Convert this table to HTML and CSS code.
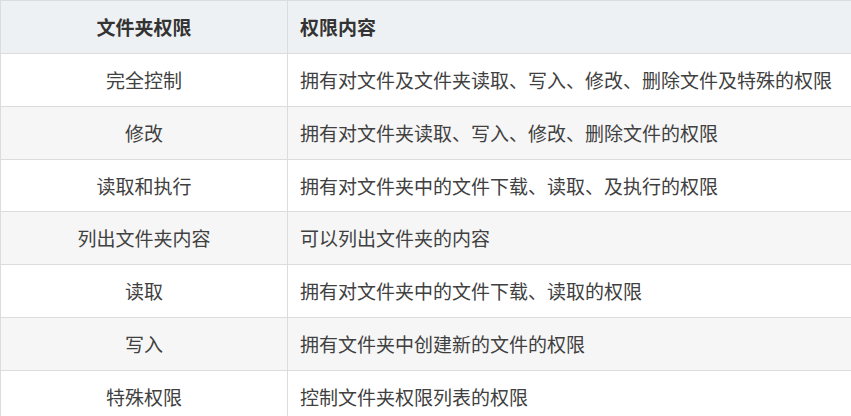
FILE: index.html
```html
<!DOCTYPE html>
<html lang="zh-CN">
<head>
<meta charset="utf-8">
<link rel="stylesheet" href="styles.css">
</head>
<body>
<table class="perm-table">
  <thead>
    <tr><th class="c1">文件夹权限</th><th class="c2">权限内容</th></tr>
  </thead>
  <tbody>
    <tr><td class="c1">完全控制</td><td class="c2">拥有对文件及文件夹读取、写入、修改、删除文件及特殊的权限</td></tr>
    <tr><td class="c1">修改</td><td class="c2">拥有对文件夹读取、写入、修改、删除文件的权限</td></tr>
    <tr><td class="c1">读取和执行</td><td class="c2">拥有对文件夹中的文件下载、读取、及执行的权限</td></tr>
    <tr><td class="c1">列出文件夹内容</td><td class="c2">可以列出文件夹的内容</td></tr>
    <tr><td class="c1">读取</td><td class="c2">拥有对文件夹中的文件下载、读取的权限</td></tr>
    <tr><td class="c1">写入</td><td class="c2">拥有文件夹中创建新的文件的权限</td></tr>
    <tr><td class="c1">特殊权限</td><td class="c2">控制文件夹权限列表的权限</td></tr>
  </tbody>
</table>
</body>
</html>
```
FILE: styles.css
```css
html, body {
  margin: 0;
  padding: 0;
  background: #fff;
  overflow: hidden;
}
.perm-table {
  border-collapse: collapse;
  width: 100%;
  table-layout: fixed;
  font-family: "Microsoft YaHei", "Noto Sans CJK SC", sans-serif;
  font-size: 19px;
  color: #404040;
}
.perm-table th,
.perm-table td {
  border: 1px solid #dcdcdc;
  padding: 14px 12px;
  line-height: 23.857px;
  height: 23.857px;
  vertical-align: middle;
  white-space: nowrap;
  overflow: hidden;
}
.perm-table th {
  background: #eef1f4;
  font-weight: bold;
  color: #333;
}
.perm-table th.c1, .perm-table td.c1 {
  width: 262px;
  text-align: center;
}
.perm-table th.c2, .perm-table td.c2 {
  text-align: left;
  border-right: none;
  padding-right: 0;
}
.perm-table tbody tr:nth-child(even) td {
  background: #f6f6f6;
}
```
